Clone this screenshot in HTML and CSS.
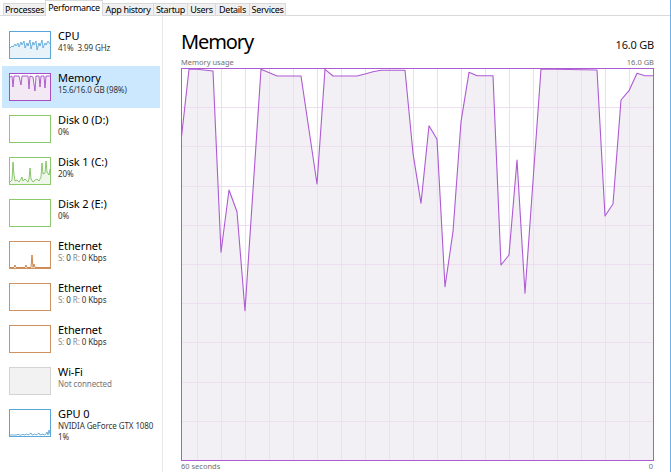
FILE: index.html
```html
<!DOCTYPE html>
<html>
<head>
<meta charset="utf-8">
<link rel="stylesheet" href="styles.css">
</head>
<body>
<div class="window">
  <div class="tabs">
    <div class="tab w-proc">Processes</div>
    <div class="tab active w-perf">Performance</div>
    <div class="tab w-app">App history</div>
    <div class="tab w-start">Startup</div>
    <div class="tab w-users">Users</div>
    <div class="tab w-det">Details</div>
    <div class="tab w-serv">Services</div>
  </div>
  <div class="body">
    <aside class="side">
      <div class="item">
        <svg class="thumb" viewBox="0 0 42 28" width="42" height="28">
          <rect x="0.5" y="0.5" width="41" height="27" fill="#fff" stroke="#5aa6d8"/>
          <polygon fill="#e8f2f9" points="1,17 3,15 4,16 6,13 7,15 9,12 10,16 12,11 13,14 15,10 16,17 18,12 19,15 21,9 22,18 24,11 25,14 27,10 28,19 30,12 31,15 33,9 34,17 36,12 37,14 39,10 41,13 41,27 1,27"/>
          <polyline fill="none" stroke="#4e9fd6" stroke-width="0.8" points="1,17 3,15 4,16 6,13 7,15 9,12 10,16 12,11 13,14 15,10 16,17 18,12 19,15 21,9 22,18 24,11 25,14 27,10 28,19 30,12 31,15 33,9 34,17 36,12 37,14 39,10 41,13"/>
        </svg>
        <div class="txt"><div class="t">CPU</div><div class="s">41%&nbsp; 3.99 GHz</div></div>
      </div>
      <div class="item sel">
        <svg class="thumb" viewBox="0 0 42 28" width="42" height="28">
          <rect x="0.5" y="0.5" width="41" height="27" fill="#fff" stroke="#a64ec8"/>
          <polygon fill="#f2e9f5" points="1,4 3,3 4,14 5,3 10,3 12,12 13,3 19,3 20,16 21,3 24,4 26,18 27,3 30,3 31,14 32,3 35,3 36,15 37,3 41,3 41,27 1,27"/>
          <polyline fill="none" stroke="#a64ec8" stroke-width="0.9" points="1,4 3,3 4,14 5,3 10,3 12,12 13,3 19,3 20,16 21,3 24,4 26,18 27,3 30,3 31,14 32,3 35,3 36,15 37,3 41,3"/>
        </svg>
        <div class="txt"><div class="t">Memory</div><div class="s">15.6/16.0 GB (98%)</div></div>
      </div>
      <div class="item">
        <svg class="thumb" viewBox="0 0 42 28" width="42" height="28">
          <rect x="0.5" y="0.5" width="41" height="27" fill="#fff" stroke="#8bc96b"/>
        </svg>
        <div class="txt"><div class="t">Disk 0 (D:)</div><div class="s">0%</div></div>
      </div>
      <div class="item">
        <svg class="thumb" viewBox="0 0 42 28" width="42" height="28">
          <rect x="0.5" y="0.5" width="41" height="27" fill="#fff" stroke="#8bc96b"/>
          <polygon fill="#eef7e9" points="1,25 3,23 4,5 5,18 6,24 8,23 10,25 12,22 13,20 14,24 16,22 18,24 19,25 20,22 21,11 22,22 24,25 26,23 28,22 30,24 32,20 33,6 34,17 36,16 37,4 38,15 40,18 41,12 41,27 1,27"/>
          <polyline fill="none" stroke="#6fb84a" stroke-width="0.8" points="1,25 3,23 4,5 5,18 6,24 8,23 10,25 12,22 13,20 14,24 16,22 18,24 19,25 20,22 21,11 22,22 24,25 26,23 28,22 30,24 32,20 33,6 34,17 36,16 37,4 38,15 40,18 41,12"/>
        </svg>
        <div class="txt"><div class="t">Disk 1 (C:)</div><div class="s">20%</div></div>
      </div>
      <div class="item">
        <svg class="thumb" viewBox="0 0 42 28" width="42" height="28">
          <rect x="0.5" y="0.5" width="41" height="27" fill="#fff" stroke="#8bc96b"/>
        </svg>
        <div class="txt"><div class="t">Disk 2 (E:)</div><div class="s">0%</div></div>
      </div>
      <div class="item">
        <svg class="thumb" viewBox="0 0 42 28" width="42" height="28">
          <rect x="0.5" y="0.5" width="41" height="27" fill="#fff" stroke="#cf915f"/>
          <polyline fill="none" stroke="#c47a3c" stroke-width="0.9" points="1,26.5 5,26.5 6,24 7,26.5 16,26.5 17,24 18,26.5 22,26.5 23,14 24,26.5 25,23 26,26.5 41,26.5"/>
        </svg>
        <div class="txt"><div class="t">Ethernet</div><div class="s"><span class="l">S:</span> 0 <span class="l">R:</span> 0 Kbps</div></div>
      </div>
      <div class="item">
        <svg class="thumb" viewBox="0 0 42 28" width="42" height="28">
          <rect x="0.5" y="0.5" width="41" height="27" fill="#fff" stroke="#cf915f"/>
        </svg>
        <div class="txt"><div class="t">Ethernet</div><div class="s"><span class="l">S:</span> 0 <span class="l">R:</span> 0 Kbps</div></div>
      </div>
      <div class="item">
        <svg class="thumb" viewBox="0 0 42 28" width="42" height="28">
          <rect x="0.5" y="0.5" width="41" height="27" fill="#fff" stroke="#cf915f"/>
        </svg>
        <div class="txt"><div class="t">Ethernet</div><div class="s"><span class="l">S:</span> 0 <span class="l">R:</span> 0 Kbps</div></div>
      </div>
      <div class="item">
        <svg class="thumb" viewBox="0 0 42 28" width="42" height="28">
          <rect x="0.5" y="0.5" width="41" height="27" fill="#f2f2f2" stroke="#d4d4d4"/>
        </svg>
        <div class="txt"><div class="t">Wi-Fi</div><div class="s dim">Not connected</div></div>
      </div>
      <div class="item">
        <svg class="thumb" viewBox="0 0 42 28" width="42" height="28">
          <rect x="0.5" y="0.5" width="41" height="27" fill="#fff" stroke="#5aa6d8"/>
          <polyline fill="none" stroke="#4e9fd6" stroke-width="0.8" points="1,26 8,26 9,25 10,26 13,26 14,25 15,26 18,25 19,26 22,24 23,26 26,25 27,26 30,24 31,26 34,25 35,26 37,25 38,23 39,26 40,21 41,25"/>
        </svg>
        <div class="txt"><div class="t">GPU 0</div><div class="s">NVIDIA GeForce GTX 1080</div><div class="s">1%</div></div>
      </div>
    </aside>
    <main class="main">
      <div class="head">
        <div class="title">Memory</div>
        <div class="total">16.0 GB</div>
      </div>
      <div class="sub">
        <span>Memory usage</span>
        <span>16.0 GB</span>
      </div>
      <svg class="graph" width="473" height="393" viewBox="0 0 473 393">
        <rect x="0.5" y="0.5" width="472" height="392" fill="#fff"/>
        <polygon fill="#f3f0f5" points="0.5,68.7 8,1.3 16,1.3 32,3 40,184.3 48,122 56,143.7 64,242.7 80,1.3 96,8 120,8 136,116 144,1.3 152,8 176,8 184,6 192,3.7 200,2.3 224,2.3 232,85.3 240,135.3 248,57.7 256,71.3 264,218.7 272,163.7 280,53.7 288,4.3 296,7.7 312,7.7 320,197 328,187 336,92 344,225.3 360,1 416,2 424,148 432,136 440,32 448,22.7 456,5.3 464,7.7 472.5,7.7 472.5,392.5 0.5,392.5"/>
        <g stroke="#ebdff0" stroke-width="1">
          <line x1="16.5" y1="0" x2="16.5" y2="393"/>
          <line x1="40.5" y1="0" x2="40.5" y2="393"/>
          <line x1="64.5" y1="0" x2="64.5" y2="393"/>
          <line x1="88.5" y1="0" x2="88.5" y2="393"/>
          <line x1="112.5" y1="0" x2="112.5" y2="393"/>
          <line x1="136.5" y1="0" x2="136.5" y2="393"/>
          <line x1="160.5" y1="0" x2="160.5" y2="393"/>
          <line x1="184.5" y1="0" x2="184.5" y2="393"/>
          <line x1="208.5" y1="0" x2="208.5" y2="393"/>
          <line x1="232.5" y1="0" x2="232.5" y2="393"/>
          <line x1="256.5" y1="0" x2="256.5" y2="393"/>
          <line x1="280.5" y1="0" x2="280.5" y2="393"/>
          <line x1="304.5" y1="0" x2="304.5" y2="393"/>
          <line x1="328.5" y1="0" x2="328.5" y2="393"/>
          <line x1="352.5" y1="0" x2="352.5" y2="393"/>
          <line x1="376.5" y1="0" x2="376.5" y2="393"/>
          <line x1="400.5" y1="0" x2="400.5" y2="393"/>
          <line x1="424.5" y1="0" x2="424.5" y2="393"/>
          <line x1="448.5" y1="0" x2="448.5" y2="393"/>
          <line x1="0" y1="39.5" x2="473" y2="39.5"/>
          <line x1="0" y1="78.5" x2="473" y2="78.5"/>
          <line x1="0" y1="118.5" x2="473" y2="118.5"/>
          <line x1="0" y1="157.5" x2="473" y2="157.5"/>
          <line x1="0" y1="196.5" x2="473" y2="196.5"/>
          <line x1="0" y1="235.5" x2="473" y2="235.5"/>
          <line x1="0" y1="274.5" x2="473" y2="274.5"/>
          <line x1="0" y1="314.5" x2="473" y2="314.5"/>
          <line x1="0" y1="353.5" x2="473" y2="353.5"/>
        </g>
        <polyline fill="none" stroke="#ad5ad3" stroke-width="1.1" stroke-linejoin="round" points="0.5,68.7 8,1.3 16,1.3 32,3 40,184.3 48,122 56,143.7 64,242.7 80,1.3 96,8 120,8 136,116 144,1.3 152,8 176,8 184,6 192,3.7 200,2.3 224,2.3 232,85.3 240,135.3 248,57.7 256,71.3 264,218.7 272,163.7 280,53.7 288,4.3 296,7.7 312,7.7 320,197 328,187 336,92 344,225.3 360,1 416,2 424,148 432,136 440,32 448,22.7 456,5.3 464,7.7 472.5,7.7"/>
        <rect x="0.5" y="0.5" width="472" height="392" fill="none" stroke="#ad5ad3"/>
      </svg>
      <div class="foot">
        <span>60 seconds</span>
        <span>0</span>
      </div>
    </main>
  </div>
</div>
</body>
</html>
```

FILE: styles.css
```css
html, body {
  margin: 0;
  padding: 0;
  background: #fff;
}
body {
  font-family: "Noto Sans", "Open Sans", sans-serif;
  width: 671px;
  height: 472px;
  overflow: hidden;
  color: #000;
}
.window {
  width: 671px;
  height: 472px;
  box-sizing: border-box;
  border-right: 1px solid #6fb0f3;
  display: flex;
  flex-direction: column;
}
.tabs {
  display: flex;
  align-items: flex-end;
  height: 16px;
  box-sizing: border-box;
  border-bottom: 1px solid #dadada;
  padding-left: 3px;
  flex: none;
}
.tab {
  box-sizing: border-box;
  height: 12px;
  padding: 0;
  background: #f0f0f0;
  border: 1px solid #d9d9d9;
  border-bottom: none;
  margin-right: -1px;
  font-size: 9px;
  line-height: 11px;
  letter-spacing: -0.3px;
  text-align: center;
  color: #000;
  white-space: nowrap;
}
.tab.active {
  height: 16px;
  line-height: 13px;
  background: #fff;
  margin-bottom: -1px;
}
.w-proc { width: 43px; }
.w-perf { width: 58px; }
.w-app { width: 52px; }
.w-start { width: 35px; }
.w-users { width: 29px; }
.w-det { width: 35px; }
.w-serv { width: 37px; }
.body {
  flex: 1;
  display: flex;
  min-height: 0;
}
.side {
  width: 163px;
  box-sizing: border-box;
  border-right: 1px solid #e8e8e8;
  padding: 8px 0 0 2px;
  flex: none;
}
.item {
  width: 158px;
  height: 42px;
  display: flex;
  gap: 7px;
  padding-left: 7px;
  box-sizing: border-box;
}
.item.sel {
  background: #cce8ff;
}
.thumb {
  flex: none;
  margin-top: 7px;
  display: block;
}
.txt {
  margin-top: 4px;
  white-space: nowrap;
}
.t {
  font-size: 11px;
  line-height: 15px;
  color: #000;
  letter-spacing: -0.1px;
}
.s {
  font-size: 8px;
  line-height: 10.9px;
  color: #333;
  letter-spacing: -0.1px;
}
.s .l {
  color: #8a8a8a;
}
.s.dim {
  color: #777;
}
.main {
  flex: 1;
  padding: 13px 16px 0 18px;
  display: flex;
  flex-direction: column;
  min-width: 0;
}
.head {
  display: flex;
  justify-content: space-between;
  align-items: baseline;
  height: 28px;
}
.title {
  font-size: 20px;
  line-height: 26px;
  letter-spacing: -1.1px;
  color: #000;
}
.total {
  font-size: 11px;
  line-height: 14px;
  letter-spacing: -0.2px;
  color: #111;
}
.sub {
  display: flex;
  justify-content: space-between;
  font-size: 7.5px;
  line-height: 11px;
  color: #707070;
  height: 11px;
}
.graph {
  display: block;
  flex: none;
}
.foot {
  display: flex;
  justify-content: space-between;
  font-size: 7.5px;
  line-height: 11px;
  color: #707070;
  padding-right: 1px;
}
```
